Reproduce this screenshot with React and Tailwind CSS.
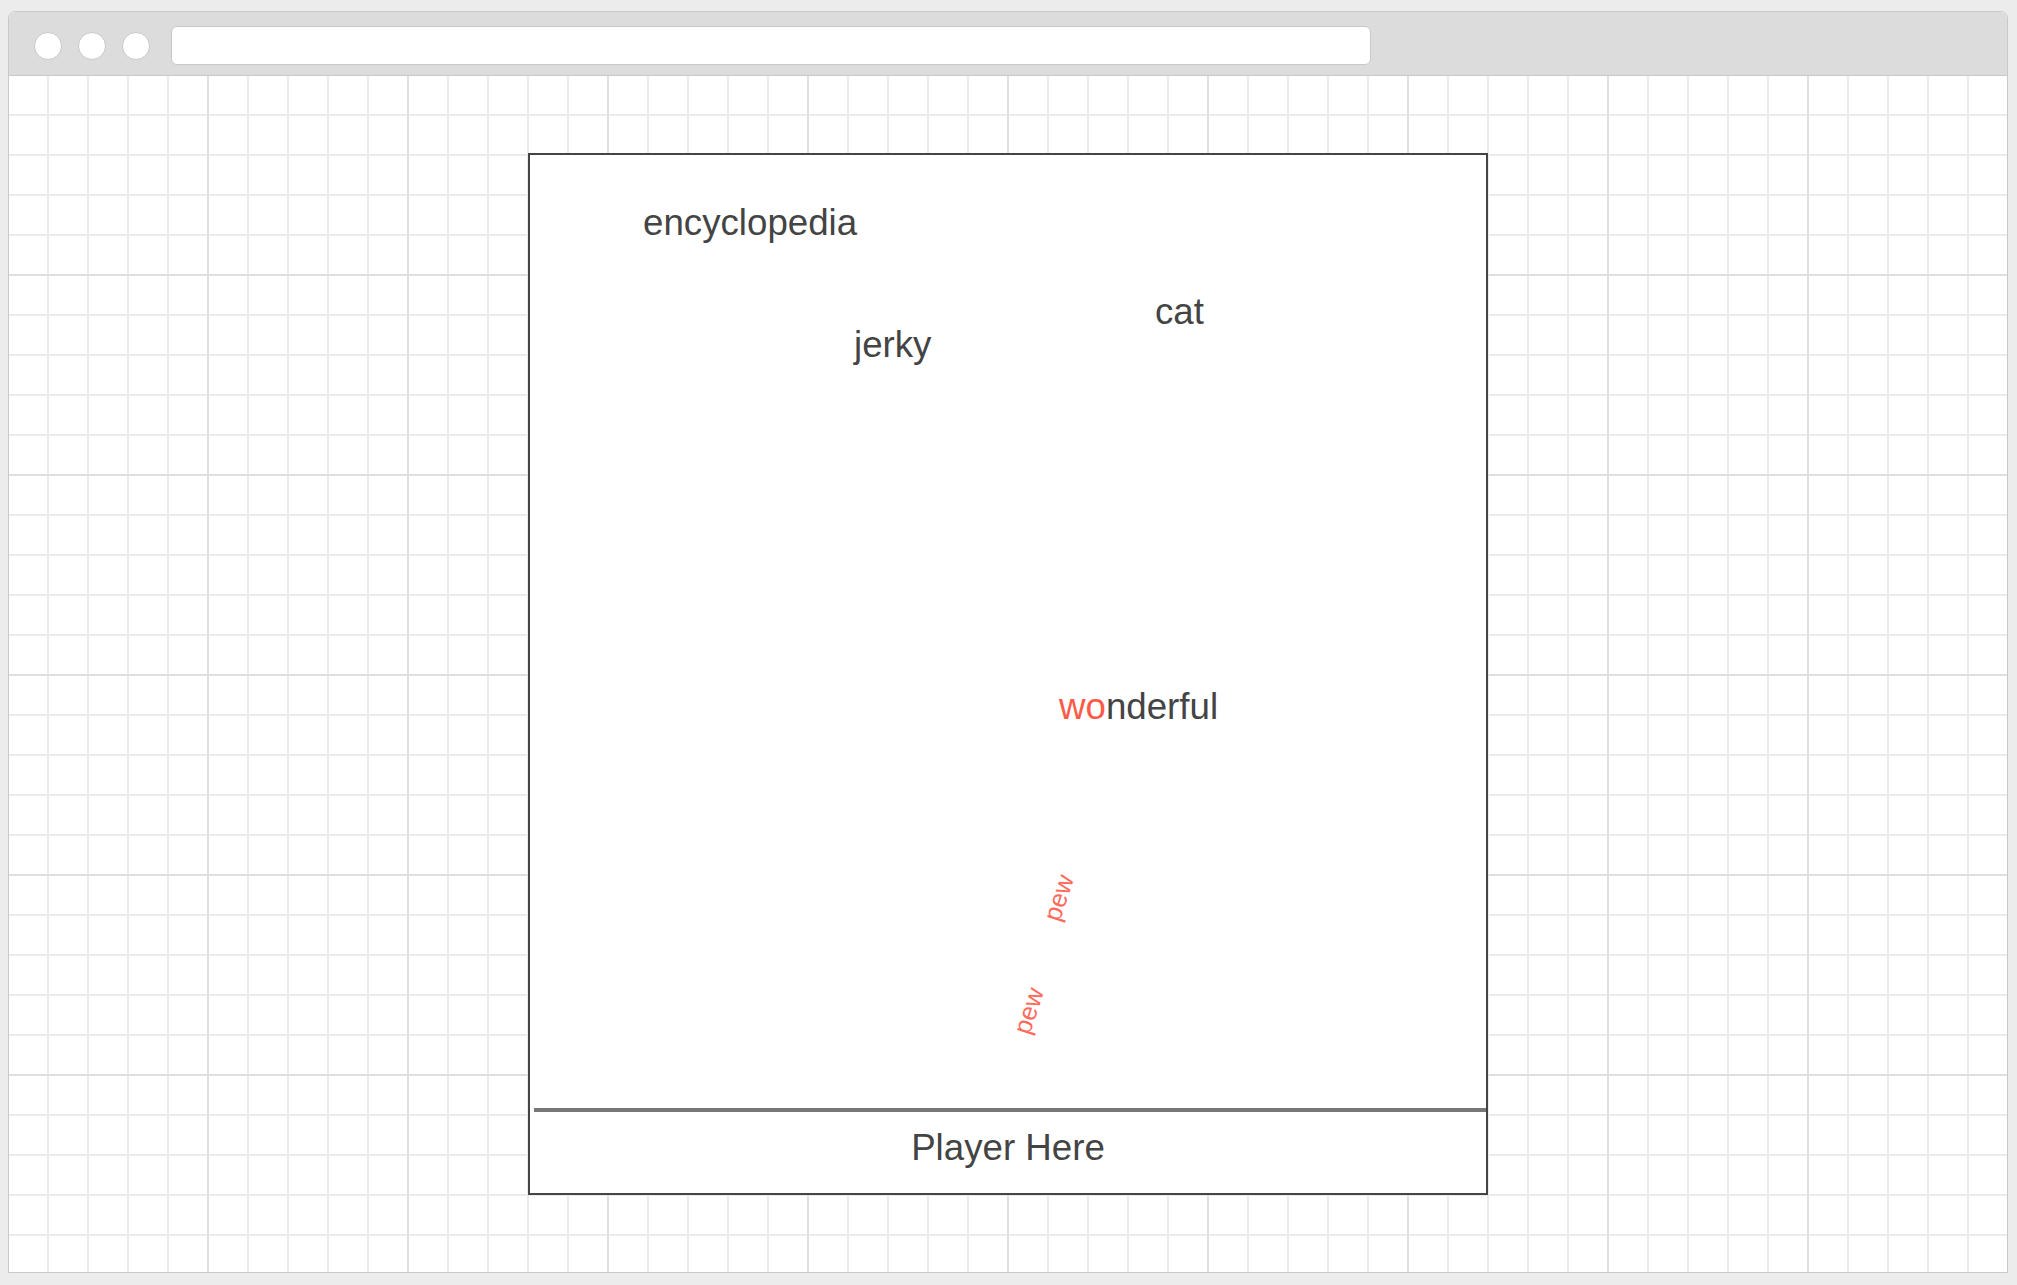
export default function App() {
  return (
    <div className="w-[2017px] h-[1285px] bg-[#ececec] pt-[11px] pl-[8px] font-['Liberation_Sans',Arial,sans-serif] overflow-hidden">
      <div className="w-[2000px] h-[1262px] border border-[#c9c9c9] rounded-t-[7px] flex flex-col overflow-hidden bg-white">
        {/* title bar */}
        <div className="h-[64px] shrink-0 bg-[#dcdcdc] border-b border-[#c9c9c9] flex items-center pt-[4px] pl-[25px]">
          <div className="flex items-center gap-[16px]">
            <div className="w-[28px] h-[28px] rounded-full bg-white border border-[#c8c8c8]" />
            <div className="w-[28px] h-[28px] rounded-full bg-white border border-[#c8c8c8]" />
            <div className="w-[28px] h-[28px] rounded-full bg-white border border-[#c8c8c8]" />
          </div>
          <div className="ml-[21px] w-[1200px] h-[39px] bg-white border border-[#c8c8c8] rounded-[6px]" />
        </div>
        {/* grid content */}
        <div className="flex-1 [background-image:linear-gradient(to_right,transparent_198px,#dfdfdf_198px,#dfdfdf_200px,transparent_200px),linear-gradient(to_bottom,transparent_198px,#dfdfdf_198px,#dfdfdf_200px,transparent_200px),linear-gradient(to_right,transparent_38px,#ebebeb_38px,#ebebeb_40px,transparent_40px),linear-gradient(to_bottom,transparent_38px,#ebebeb_38px,#ebebeb_40px,transparent_40px)] [background-size:200px_200px,200px_200px,40px_40px,40px_40px] pt-[77px]">
          <div className="mx-auto w-[960px] h-[1042px] border-2 border-[#444444] bg-white flex flex-col">
            <div className="relative flex-1 text-[36.7px] leading-none text-[#444444]">
              <span className="absolute left-[113px] top-[50px]">encyclopedia</span>
              <span className="absolute left-[324px] top-[172px]">jerky</span>
              <span className="absolute left-[625px] top-[139px]">cat</span>
              <span className="absolute left-[529px] top-[534px]">
                <span className="text-[#ff5a48]">wo</span>nderful
              </span>
              <span className="absolute left-[529px] top-[743px] -translate-x-1/2 -translate-y-1/2 rotate-[-72deg] text-[25.5px] leading-none text-[#ff6a5c]">
                pew
              </span>
              <span className="absolute left-[499px] top-[856px] -translate-x-1/2 -translate-y-1/2 rotate-[-72deg] text-[25.5px] leading-none text-[#ff6a5c]">
                pew
              </span>
            </div>
            <div className="ml-[4px] h-[4px] shrink-0 bg-[#777777]" />
            <div className="h-[81px] shrink-0 flex items-center justify-center pb-[10px] text-[36.7px] text-[#444444]">
              Player Here
            </div>
          </div>
        </div>
      </div>
    </div>
  );
}
